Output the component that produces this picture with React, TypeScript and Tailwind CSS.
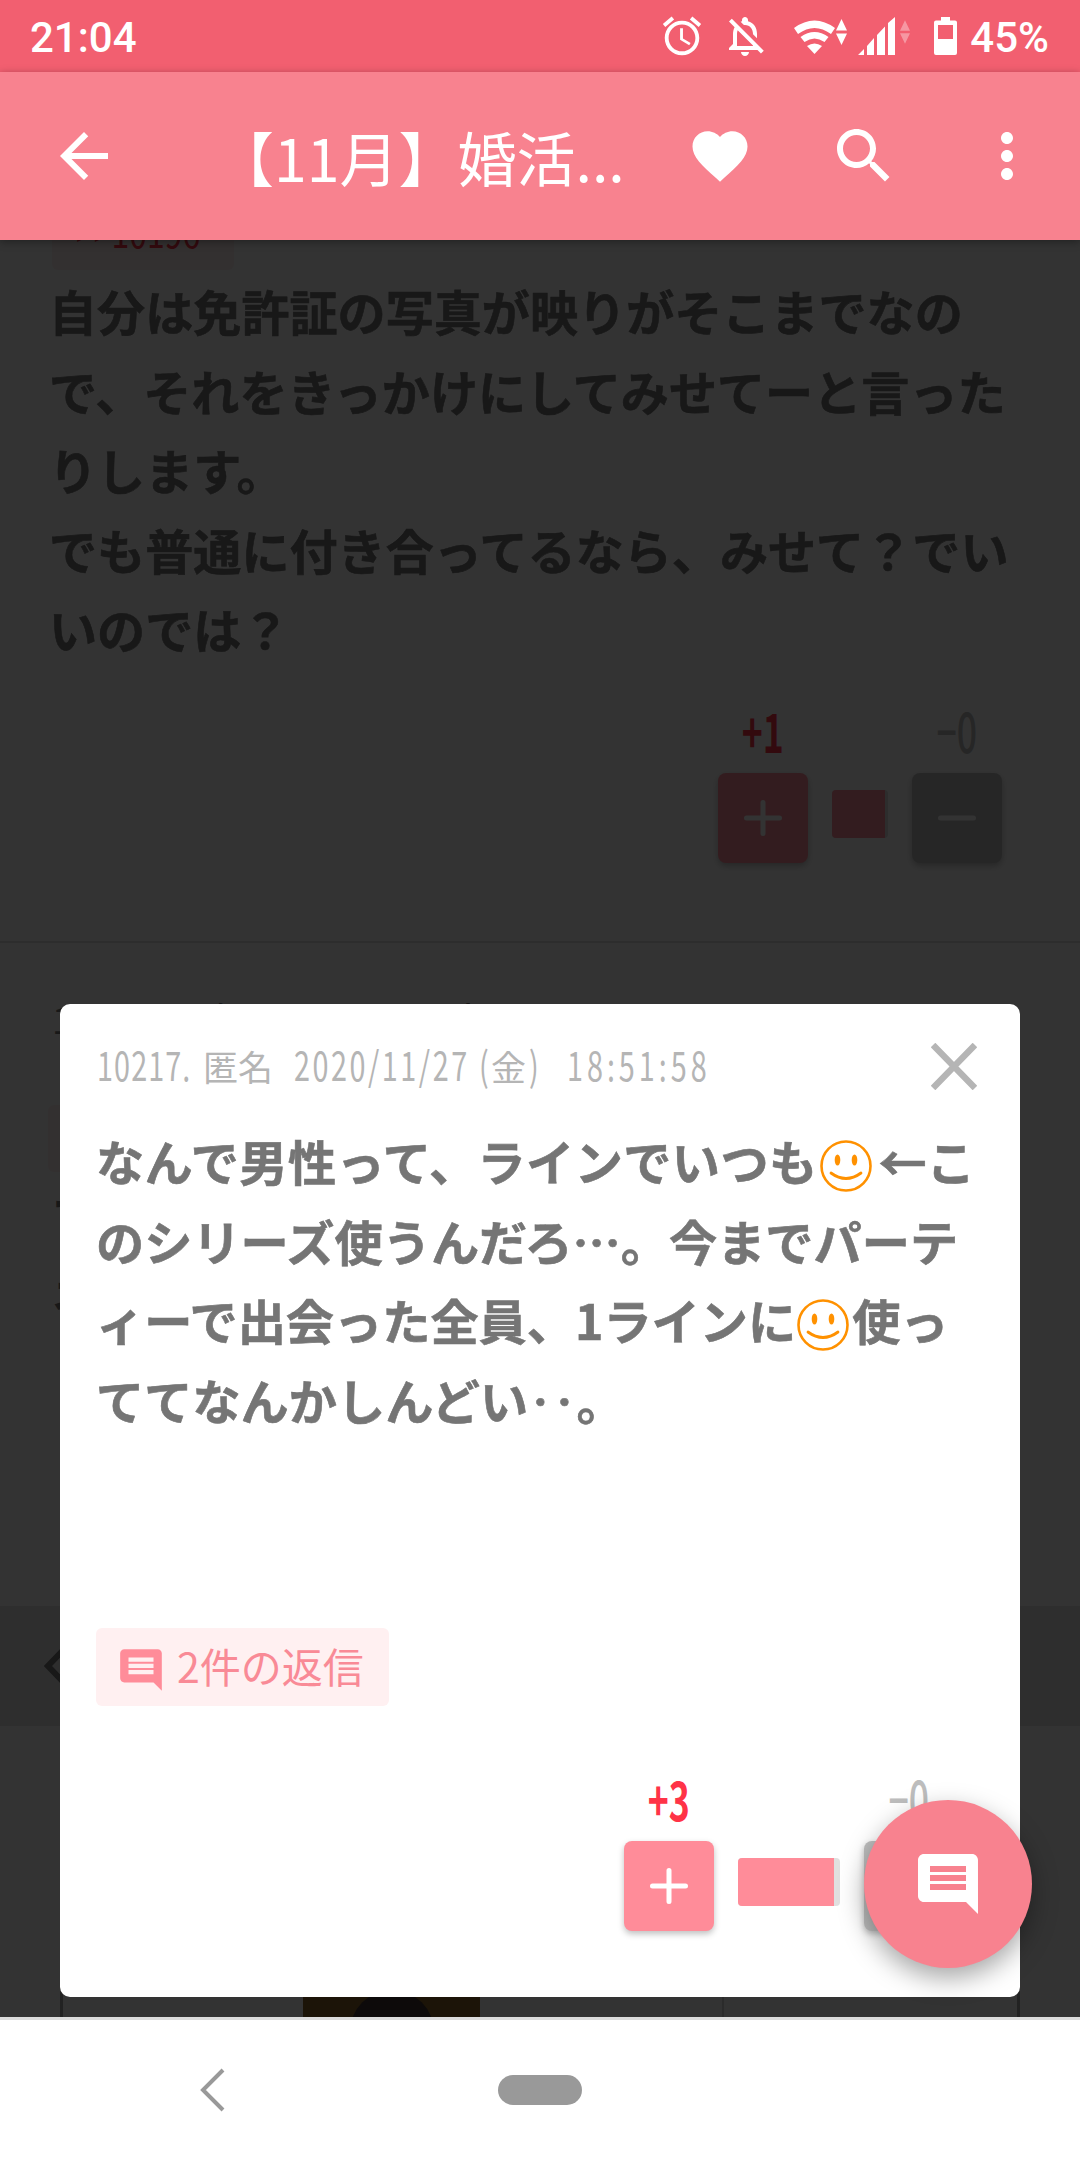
import React from "react";

const Smile = ({ className }: { className: string }) => (
  <svg viewBox="0 0 52 52" className={`inline-block w-[52px] h-[52px] align-[-11px] ${className}`}>
    <circle cx="26" cy="26" r="24.5" fill="none" stroke="#ff9100" strokeWidth="2.6" />
    <ellipse cx="17.5" cy="20" rx="2.8" ry="5.6" fill="#ff9100" />
    <ellipse cx="34.5" cy="20" rx="2.8" ry="5.6" fill="#ff9100" />
    <path d="M11 33 Q26 44 41 33" fill="none" stroke="#ff9100" strokeWidth="2.8" strokeLinecap="round" />
  </svg>
);

const CommentIcon = ({ className, fill }: { className: string; fill: string }) => (
  <svg viewBox="0 0 24 24" className={className} fill={fill}>
    <path d="M21.99 4c0-1.1-.89-2-1.99-2H4c-1.1 0-2 .9-2 2v12c0 1.1.9 2 2 2h14l4 4-.01-18zM18 14H6v-2h12v2zm0-3H6V9h12v2zm0-3H6V6h12v2z" />
  </svg>
);

const Meta = ({ id, date, wd, time, color }: { id: string; date: string; wd: string; time: string; color: string }) => (
  <div className={`flex items-baseline h-10 leading-10 text-[40px] whitespace-nowrap ${color}`}>
    <span className="w-[106px]"><span className="inline-block origin-left scale-x-[0.72] tracking-[1.5px]">{id}</span></span>
    <span className="w-[91px] text-[35px]">匿名</span>
    <span className="w-[185px]"><span className="inline-block origin-left scale-x-[0.72] tracking-[3.5px]">{date}</span></span>
    <span className="w-[12px]"><span className="inline-block origin-left scale-x-[0.72]">(</span></span>
    <span className="w-[38px] text-[35px]">{wd}</span>
    <span className="w-[38px]"><span className="inline-block origin-left scale-x-[0.72]">)</span></span>
    <span><span className="inline-block origin-left scale-x-[0.72] tracking-[5.5px]">{time}</span></span>
  </div>
);

const Vote = ({ plus, barWidth, fillWidth }: { plus: string; barWidth: string; fillWidth: string }) => (
  <div className="flex items-end gap-6">
    <div className="flex flex-col items-center w-[90px]">
      <div className="-translate-y-[2px] h-[60px] leading-[60px] text-[54px] font-bold text-[#ff3347] scale-x-[0.66]">{plus}</div>
      <div className="mt-[11px] w-[90px] h-[90px] rounded-lg bg-[#ff8c99] shadow-[0_3px_6px_rgba(0,0,0,0.25)] flex items-center justify-center">
        <svg viewBox="0 0 38 36" className="w-[38px] h-[36px]">
          <path d="M2.5 18H35.5M19 2.5V33.5" stroke="#fff" strokeWidth="5" strokeLinecap="round" />
        </svg>
      </div>
    </div>
    <div className={`mb-[25px] h-12 rounded overflow-hidden bg-[#e0e0e0] ${barWidth}`}>
      <div className={`h-full bg-[#ff8c99] ${fillWidth}`} />
    </div>
    <div className="flex flex-col items-center w-[90px]">
      <div className="-translate-y-[2px] h-[60px] leading-[60px] text-[54px] font-medium text-[#bdbdbd] scale-x-[0.66]">−0</div>
      <div className="mt-[11px] w-[90px] h-[90px] rounded-lg bg-[#bdbdbd] shadow-[0_3px_6px_rgba(0,0,0,0.25)] flex items-center justify-center">
        <svg viewBox="0 0 38 6" className="w-[38px] h-[6px]">
          <path d="M2.5 3H35.5" stroke="#fff" strokeWidth="5" strokeLinecap="round" />
        </svg>
      </div>
    </div>
  </div>
);

const Arrows = ({ className, opacity }: { className: string; opacity?: number }) => (
  <svg viewBox="0 0 11 26" className={className} fill="#fff" opacity={opacity}>
    <path d="M5.5 0 11 11.5H0zM0 14.5H11L5.5 26z" />
  </svg>
);

function StatusBar() {
  return (
    <div className="h-[72px] shrink-0 bg-[#f25f70] flex items-center text-white font-['Roboto',sans-serif] font-medium text-[42px]">
      <span className="ml-[30px] mt-[2px]">21:04</span>
      <svg viewBox="0 0 24 24" className="ml-auto w-[46px] h-[46px] -mt-[1px]" fill="#fff">
        <path d="M22 5.72l-4.6-3.86-1.29 1.53 4.6 3.86L22 5.72zM7.88 3.39L6.6 1.86 2 5.71l1.29 1.53 4.59-3.85zM12.5 8H11v6l4.75 2.85.75-1.23-4-2.37V8zM12 4c-4.97 0-9 4.03-9 9s4.03 9 9 9 9-4.03 9-9-4.03-9-9-9zm0 16c-3.87 0-7-3.13-7-7s3.13-7 7-7 7 3.13 7 7-3.13 7-7 7z" />
      </svg>
      <svg viewBox="0 0 24 24" className="ml-[16px] w-[48px] h-[48px]" fill="#fff">
        <path d="M12 22c1.1 0 2-.9 2-2h-4c0 1.1.9 2 2 2zm0-15.5c2.49 0 4 2.02 4 4.5v.1l2 2V11c0-3.07-1.63-5.64-4.5-6.32V4c0-.83-.67-1.5-1.5-1.5s-1.5.67-1.5 1.5v.68c-.24.06-.47.15-.69.23l1.64 1.64c.18-.02.36-.05.55-.05zM5.41 3.35L4 4.76l2.81 2.81C6.29 8.57 6 9.74 6 11v5l-2 2v1h14.24l1.74 1.74 1.41-1.41L5.41 3.35zM16 17H8v-6c0-.68.12-1.32.34-1.9L16 16.76V17z" />
      </svg>
      <svg viewBox="0 0 41 35" className="ml-[25px] w-[41px] h-[35px]" fill="#fff">
        <path d="M0 9 Q20.5 -6 41 9 L37 15 Q20.5 3 4 15 Z" />
        <path d="M6.5 18 Q20.5 8 34.5 18 L30.5 23 Q20.5 16 10.5 23 Z" />
        <path d="M13 27 Q20.5 22 28 27 L20.5 35 Z" />
      </svg>
      <Arrows className="ml-[1px] w-[11px] h-[26px] -mt-[9px]" />
      <svg viewBox="0 0 37 38" className="ml-[11px] w-[37px] h-[38px]" fill="#fff">
        <path d="M0 38 6 32V38ZM9 29 16 21V38H9ZM19 18 27 9.5V38H19ZM30 6 37 0V38H30Z" />
      </svg>
      <Arrows className="ml-[5px] w-[10px] h-[26px] -mt-[9px]" opacity={0.35} />
      <svg viewBox="0 0 23 38" className="ml-[24px] w-[23px] h-[38px]">
        <path fill="#fff" d="M7 0H16V3.5H21A2 2 0 0 1 23 5.500V36A2 2 0 0 1 21 38H2A2 2 0 0 1 0 36V5.500A2 2 0 0 1 2 3.500H7Z" />
        <rect x="4" y="8" width="15" height="14" fill="#f25f70" />
      </svg>
      <span className="ml-[13px] mr-[31px] mt-[2px]">45%</span>
    </div>
  );
}

function AppBar() {
  return (
    <div className="relative z-20 h-[168px] shrink-0 bg-[#f8828f] flex items-center shadow-[0_2px_8px_rgba(0,0,0,0.35)] text-white">
      <svg viewBox="0 0 24 24" className="ml-[48px] w-[72px] h-[72px]" fill="#fff">
        <path d="M20 11H7.830l5.590-5.590L12 4l-8 8 8 8 1.410-1.410L7.830 13H20v-2z" />
      </svg>
      <span className="ml-[95px] w-[472px] text-[59px] leading-none whitespace-nowrap">【11月】婚活...</span>
      <svg viewBox="0 0 24 24" className="w-[66px] h-[66px]" fill="#fff">
        <path d="M12 21.350l-1.450-1.320C5.400 15.360 2 12.280 2 8.500 2 5.420 4.420 3 7.500 3c1.740 0 3.410.81 4.500 2.090C13.090 3.810 14.760 3 16.500 3 19.580 3 22 5.420 22 8.500c0 3.780-3.400 6.860-8.550 11.540L12 21.350z" />
      </svg>
      <svg viewBox="0 0 24 24" className="ml-[75px] w-[72px] h-[72px]" fill="#fff">
        <path d="M15.500 14h-.79l-.28-.27C15.410 12.590 16 11.110 16 9.500 16 5.910 13.090 3 9.500 3S3 5.910 3 9.500 5.910 16 9.500 16c1.610 0 3.090-.59 4.230-1.570l.27.28v.79l5 4.990L20.490 19l-4.990-5zm-6 0C7.010 14 5 11.990 5 9.500S7.010 5 9.500 5 14 7.010 14 9.500 11.990 14 9.500 14z" />
      </svg>
      <svg viewBox="0 0 24 24" className="ml-[71px] w-[72px] h-[72px]" fill="#fff">
        <path d="M12 8c1.100 0 2-.9 2-2s-.9-2-2-2-2 .9-2 2 .9 2 2 2zm0 2c-1.100 0-2 .9-2 2s.9 2 2 2 2-.9 2-2-.9-2-2-2zm0 6c-1.100 0-2 .9-2 2s.9 2 2 2 2-.9 2-2-.9-2-2-2z" />
      </svg>
    </div>
  );
}

function BackgroundFeed() {
  return (
    <div className="bg-white">
      <div className="-mt-[48px] ml-[52px] w-[182px] h-[78px] rounded-md bg-[#fff0f1] flex items-center pl-6 text-[40px] text-[#ff3347]">
        <span className="inline-block origin-left scale-x-[0.8]">&gt;&gt;10196</span>
      </div>
      <p className="mt-[1px] ml-[49px] w-[980px] text-[48.1px] leading-[79.5px] font-bold text-[#777] [-webkit-text-stroke:0.6px_#777]">
        自分は免許証の写真が映りがそこまでなので、それをきっかけにしてみせてーと言ったりします。
        <br />
        でも普通に付き合ってるなら、みせて？でいいのでは？
      </p>
      <div className="mt-[33.5px] flex justify-end pr-[78px]">
        <Vote plus="+1" barWidth="w-[56px]" fillWidth="w-[53px]" />
      </div>
      <div className="mt-[78px] h-[2px] bg-[#e0e0e0]" />
      <div className="mt-[55px] ml-[52px] h-10 leading-10 text-[36px] text-[#777] whitespace-nowrap">
        10218. 匿名 2020/11/27(金) 18:53:12
      </div>
      <div className="mt-[67px] ml-[48px] w-[182px] h-[67px] rounded-md bg-[#fff0f1]" />
      <p className="mt-[3px] ml-[52px] w-[976px] text-[48px] leading-[79.5px] font-bold text-[#777]">
        マ
        <br />
        ネ
      </p>
      <div className="mt-[272px] h-[120px] bg-[#e6e6e6] flex items-center pl-[44px]">
        <svg viewBox="0 0 30 52" className="w-[30px] h-[52px]">
          <path d="M26 3 4 26l22 23" fill="none" stroke="#777" strokeWidth="6" />
        </svg>
      </div>
      <div className="mt-[24px] mx-[60px] h-[400px] border-x-[3px] border-[#aaa] flex">
        <div className="ml-[240px] w-[177px] bg-[#8a6428] flex justify-center items-start pt-[240px]">
          <div className="w-[84px] h-[130px] rounded-t-full bg-[#403432]" />
        </div>
        <div className="ml-[242px] w-[2px] bg-[#d8d8d8]" />
      </div>
    </div>
  );
}

function Dialog() {
  return (
    <div className="absolute left-[60px] top-[764px] w-[960px] h-[993px] bg-white rounded-[10px] flex flex-col">
      <div className="flex items-start justify-between pl-[37px] pr-[43px] pt-[39px]">
        <div className="pt-[1px]">
          <Meta id="10217." date="2020/11/27" wd="金" time="18:51:58" color="text-[#b5b5b5]" />
        </div>
        <svg viewBox="0 0 46 47" className="w-[46px] h-[47px]">
          <path d="M2 2 44 45M44 2 2 45" stroke="#b5b5b5" strokeWidth="6.5" />
        </svg>
      </div>
      <p className="mt-[31px] ml-[36px] text-[48.2px] leading-[79.5px] font-bold text-[#757575] [-webkit-text-stroke:0.6px_#757575] whitespace-nowrap">
        <span className="tracking-[0.4px]">なんで男性って、ラインでいつも</span>
        <Smile className="ml-[2px] mr-[7px]" />←こ
        <br />
        のシリーズ使うんだろ…。今までパーテ
        <br />
        ィーで出会った全員、1ラインに<Smile className="ml-[1px] mr-[3px]" />使っ
        <br />
        ててなんかしんどい‥。
      </p>
      <div className="mt-[189px] ml-[36px] w-[293px] h-[78px] rounded-md bg-[#fff0f1] flex items-center pl-[20px]">
        <CommentIcon className="w-[50px] h-[50px] mt-[6px]" fill="#ff8c99" />
        <span className="ml-[11px] -mt-[3px] text-[41px] leading-none text-[#f98a96] whitespace-nowrap">2件の返信</span>
      </div>
      <div className="mt-[64px] self-end mr-[66px]">
        <Vote plus="+3" barWidth="w-[102px]" fillWidth="w-[96px]" />
      </div>
    </div>
  );
}

export default function App() {
  return (
    <div className="relative w-[1080px] h-[2160px] overflow-hidden flex flex-col bg-white font-['Noto_Sans_CJK_JP','Noto_Sans',sans-serif]">
      <StatusBar />
      <AppBar />
      <div className="relative flex-1 min-h-0 overflow-hidden">
        <BackgroundFeed />
        <div className="absolute inset-0 bg-black/80" />
        <Dialog />
        <button className="absolute left-[864px] top-[1560px] w-[168px] h-[168px] rounded-full bg-[#f8828f] shadow-[0_10px_26px_rgba(0,0,0,0.35)] flex items-center justify-center">
          <CommentIcon className="w-[72px] h-[72px]" fill="#fff" />
        </button>
      </div>
      <div className="h-[143px] shrink-0 bg-white border-t-[3px] border-[#dcdcdc] relative z-10">
        <div className="flex items-center h-[140px]">
          <svg viewBox="0 0 26 44" className="ml-[199px] w-[26px] h-[44px]">
            <path d="M24 2 4 22l20 20" fill="none" stroke="#999" strokeWidth="4" />
          </svg>
          <div className="ml-[273px] w-[84px] h-[30px] rounded-[15px] bg-[#999]" />
        </div>
      </div>
    </div>
  );
}
